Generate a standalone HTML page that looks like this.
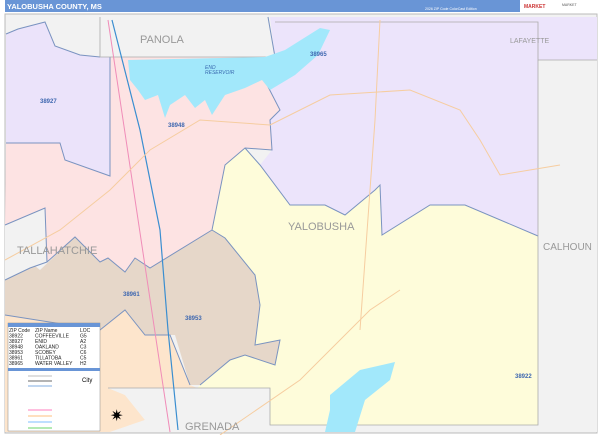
<!DOCTYPE html>
<html><head><meta charset="utf-8"><style>
html,body{margin:0;padding:0;background:#fff;width:600px;height:435px;overflow:hidden;font-family:"Liberation Sans",sans-serif}
</style></head><body>
<svg width="600" height="435" xmlns="http://www.w3.org/2000/svg" font-family="Liberation Sans, sans-serif">
<rect width="600" height="435" fill="#fff"/>
<rect x="5" y="0" width="515" height="12" fill="#6995d6"/>
<text x="7" y="9" font-size="7.5" font-weight="bold" fill="#fff">YALOBUSHA COUNTY, MS</text>
<text x="425" y="10" font-size="3.5" fill="#fff">2026 ZIP Code ColorCast Edition</text>
<rect x="520" y="0" width="78" height="12" fill="#fff"/>
<text x="524" y="8" font-size="5" fill="#c33" font-weight="bold">MARKET</text>
<text x="562" y="6" font-size="3.5" fill="#555">MARKET</text>
<rect x="5" y="14" width="592" height="419" fill="#f2f2f2" stroke="#bbb" stroke-width="1"/>
<polygon points="268,17 597,17 597,60 275,60" fill="#ece4fb"/>
<!-- 38927 left purple -->
<polygon points="6,17 100,17 100,57 110,57 110,176 65,160 60,143 6,143" fill="#ebe3fa"/>
<!-- Panola gray -->
<polygon points="6,17 270,17 275,57 100,57 80,55 55,46 45,22 18,29 6,34" fill="#f2f2f2"/>
<!-- 38948 pink -->
<polygon points="110,57 265,57 262,75 280,110 270,120 272,150 245,148 225,165 215,215 212,230 150,268 135,258 125,272 108,258 100,262 75,237 47,262 45,208 5,225 6,143 60,143 65,160 110,176" fill="#fde3e3"/>
<!-- 38965 purple -->
<polygon points="265,57 275,57 275,60 538,60 538,236 465,205 430,205 382,235 380,185 375,190 345,215 325,205 290,205 260,165 272,150 270,120 280,110 262,75" fill="#ece4fb"/>
<rect x="538" y="60" width="59" height="372" fill="#f2f2f2"/>
<!-- Yellow 38922 -->
<polygon points="245,148 260,165 290,205 325,205 345,215 375,190 380,185 382,235 430,205 465,205 538,236 538,425 270,425 270,388 245,388 197,388 230,360 245,355 275,365 280,340 255,345 260,305 255,275 225,238 212,230 215,215 225,165" fill="#fefcda"/>
<!-- brown -->
<polygon points="5,280 30,262 40,270 75,237 100,262 108,258 125,272 135,258 150,268 212,230 225,238 255,275 260,305 255,345 280,340 275,365 245,355 230,360 200,385 190,385 175,335 170,335 145,335 125,310 100,330 5,315" fill="#e6d7c9"/>
<!-- peach -->
<polygon points="5,315 100,330 125,310 145,335 170,335 190,385 197,388 108,388 5,388" fill="#fde5cc"/>
<polygon points="5,388 108,388 125,395 145,420 110,432 5,432" fill="#fde5cc"/>
<polygon points="5,225 45,208 47,262 30,268 5,280" fill="#f2f2f2"/>
<polygon points="108,388 245,388 245,432 110,432 145,420 125,395" fill="#f2f2f2"/>
<rect x="245" y="388" width="25" height="44" fill="#f2f2f2"/>
<rect x="270" y="425" width="327" height="7" fill="#f2f2f2"/>
<g fill="none" stroke="#7a93c0" stroke-width="1">
<polyline points="110,57 110,176 65,160 60,143 6,143"/>
<polyline points="265,57 262,75 280,110 270,120 272,150 245,148 225,165 215,215 212,230 150,268 135,258 125,272 108,258 100,262 75,237 47,262"/>
<polyline points="245,148 260,165 290,205 325,205 345,215 375,190 380,185 382,235 430,205 465,205 538,236"/>
<polyline points="212,230 225,238 255,275 260,305 255,345 280,340 275,365 245,355 230,360 200,385"/>
<polyline points="5,315 100,330 125,310 145,335 170,335 190,385"/>
<polyline points="5,225 45,208 47,262 30,268 5,280"/>
<polyline points="6,34 18,29 45,22 55,46 80,55 100,57"/>
<polyline points="268,17 275,57"/>
</g>
<g fill="none" stroke="#aaa" stroke-width="0.8">
<polyline points="100,17 100,57 275,57"/>
<polyline points="275,22 538,22 538,60 597,60"/>
<polyline points="538,60 538,425 270,425 270,388 108,388"/>
</g>
<path d="M128,60 L265,57 L285,50 L320,28 L330,30 L318,55 L295,75 L270,90 L262,80 L245,88 L225,95 L212,115 L205,100 L195,108 L185,95 L170,105 L165,118 L158,95 L145,100 L138,90 L130,80 Z" fill="#a2e8fb"/>
<path d="M330,395 L360,370 L395,362 L390,380 L365,400 L355,432 L325,432 L330,410 Z" fill="#a2e8fb"/>
<polyline points="108,20 170,432" stroke="#f08cb8" stroke-width="1" fill="none"/>
<polyline points="112,20 140,130 160,230 168,330 178,430" stroke="#3a8ed0" stroke-width="1.2" fill="none"/>
<polyline points="380,20 375,120 370,190 360,330" stroke="#f6cda0" stroke-width="1" fill="none"/>
<polyline points="270,125 330,95 410,90 460,110 480,140 500,175 560,165" stroke="#f6cda0" stroke-width="1" fill="none"/>
<polyline points="220,435 300,380 370,310 400,290" stroke="#f6cda0" stroke-width="1" fill="none"/>
<polyline points="5,260 60,230 110,190 150,150 200,120 270,125" stroke="#f6cda0" stroke-width="1" fill="none"/>
<g fill="#999" font-size="11">
<text x="140" y="43">PANOLA</text>
<text x="288" y="230">YALOBUSHA</text>
<text x="17" y="254">TALLAHATCHIE</text>
<text x="543" y="250" font-size="10">CALHOUN</text>
<text x="185" y="430">GRENADA</text>
<text x="510" y="43" font-size="7">LAFAYETTE</text>
</g>
<g fill="#3f68b0" font-size="6" font-weight="bold">
<text x="310" y="56">38965</text><text x="40" y="103">38927</text><text x="168" y="127">38948</text>
<text x="123" y="296">38961</text><text x="185" y="320">38953</text><text x="515" y="378">38922</text>
</g>
<text x="205" y="69" font-size="5" fill="#3a6ab0" font-style="italic">END</text>
<text x="205" y="74" font-size="5" fill="#3a6ab0" font-style="italic">RESERVOIR</text>
<rect x="8" y="323" width="92" height="108" fill="#fff" stroke="#888" stroke-width="0.5"/>
<rect x="8" y="323" width="92" height="4" fill="#6995d6"/>
<g font-size="5" fill="#222">
<text x="9" y="332">ZIP Code</text><text x="35" y="332">ZIP Name</text><text x="80" y="332">LOC</text>
<text x="9" y="337.5">38922</text><text x="35" y="337.5">COFFEEVILLE</text><text x="80" y="337.5">G5</text>
<text x="9" y="343">38927</text><text x="35" y="343">ENID</text><text x="80" y="343">A2</text>
<text x="9" y="348.5">38948</text><text x="35" y="348.5">OAKLAND</text><text x="80" y="348.5">C3</text>
<text x="9" y="354">38953</text><text x="35" y="354">SCOBEY</text><text x="80" y="354">C6</text>
<text x="9" y="359.5">38961</text><text x="35" y="359.5">TILLATOBA</text><text x="80" y="359.5">C5</text>
<text x="9" y="365">38965</text><text x="35" y="365">WATER VALLEY</text><text x="80" y="365">H2</text>
</g>
<rect x="8" y="368" width="92" height="3" fill="#6995d6"/>
<g stroke="#ccc" stroke-width="1.2"><line x1="28" y1="376" x2="52" y2="376"/><line x1="28" y1="381" x2="52" y2="381" stroke="#888"/><line x1="28" y1="386" x2="52" y2="386" stroke="#9bbde6"/>
<line x1="28" y1="410" x2="52" y2="410" stroke="#f9c"/><line x1="28" y1="416" x2="52" y2="416" stroke="#fc9"/><line x1="28" y1="422" x2="52" y2="422" stroke="#9cf"/><line x1="28" y1="428" x2="52" y2="428" stroke="#8d8"/></g>
<text x="82" y="382" font-size="6">City</text>
<text x="110" y="421" font-size="16">✷</text>
</svg>
</body></html>
